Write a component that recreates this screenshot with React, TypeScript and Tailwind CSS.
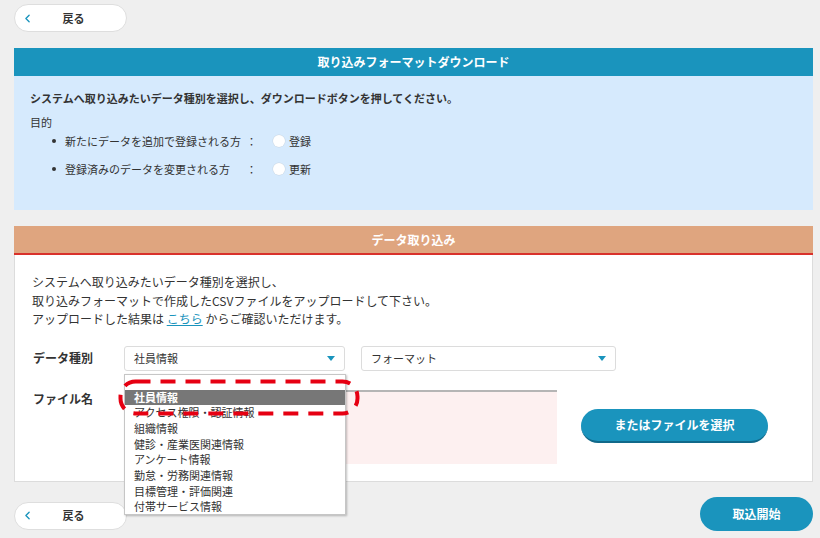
import { ChevronLeft } from "lucide-react";

const FONT = { fontFamily: '"Noto Sans CJK JP", "Noto Sans", sans-serif' };

const DATA_TYPES = [
  "社員情報",
  "アクセス権限・認証情報",
  "組織情報",
  "健診・産業医関連情報",
  "アンケート情報",
  "勤怠・労務関連情報",
  "目標管理・評価関連",
  "付帯サービス情報",
];

function BackButton() {
  return (
    <button className="relative flex h-[28px] w-[113px] items-center justify-center rounded-full border border-[#dedede] bg-white text-[11px] font-bold text-[#333]">
      <ChevronLeft className="absolute left-[6px] h-[13px] w-[13px] text-[#1a94bd]" strokeWidth={2.5} />
      <span className="pl-[6px]">戻る</span>
    </button>
  );
}

function Caret() {
  return (
    <svg width="8" height="5" viewBox="0 0 8 5" className="shrink-0">
      <path d="M0 0h8L4 5z" fill="#1a94bd" />
    </svg>
  );
}

function Radio({ label }: { label: string }) {
  return (
    <div className="ml-[15px] flex items-center gap-[4px]">
      <span className="h-[12px] w-[12px] rounded-full bg-white shadow-[0_0_0_0.5px_#c9d6e3]" />
      <span>{label}</span>
    </div>
  );
}

export default function App() {
  return (
    <div className="h-[538px] w-[820px] overflow-hidden bg-[#efefef] pl-[14px] pr-[7px] pt-[4px] text-[#333]" style={FONT}>
      <BackButton />

      {/* format download */}
      <section className="mt-[16px]">
        <div className="flex h-[28px] items-center justify-center bg-[#1a94bd] text-[12px] font-bold text-white">
          取り込みフォーマットダウンロード
        </div>
        <div className="h-[134px] bg-[#d6eafd] px-[16px] pt-[14px] text-[11px] leading-[16px]">
          <p className="font-bold">システムへ取り込みたいデータ種別を選択し、ダウンロードボタンを押してください。</p>
          <p className="mt-[8px]">目的</p>
          <ul className="mt-[3px] flex flex-col gap-[12px] pl-[22px]">
            <li className="flex items-center">
              <span className="mr-[9px] h-[4px] w-[4px] rounded-full bg-[#333]" />
              <span className="w-[181px]">新たにデータを追加で登録される方</span>
              <span className="w-[12px]">：</span>
              <Radio label="登録" />
            </li>
            <li className="flex items-center">
              <span className="mr-[9px] h-[4px] w-[4px] rounded-full bg-[#333]" />
              <span className="w-[181px]">登録済みのデータを変更される方</span>
              <span className="w-[12px]">：</span>
              <Radio label="更新" />
            </li>
          </ul>
        </div>
      </section>

      {/* data import */}
      <section className="mt-[16px]">
        <div className="flex h-[29px] items-center justify-center border-b-2 border-[#d9312b] bg-[#dfa57f] text-[12px] font-bold text-white">
          データ取り込み
        </div>
        <div className="h-[227px] border-x border-b border-[#dcdcdc] bg-white px-[17px] pt-[18px] text-[11px]">
          <div className="text-[12px] leading-[18.5px]">
            <p>システムへ取り込みたいデータ種別を選択し、</p>
            <p>取り込みフォーマットで作成したCSVファイルをアップロードして下さい。</p>
            <p>
              アップロードした結果は <span className="text-[#1a94bd] underline">こちら</span> からご確認いただけます。
            </p>
          </div>

          <div className="mt-[17px] flex items-center">
            <span className="w-[92px] pl-px text-[12px] font-bold">データ種別</span>
            <div className="relative">
              <div className="flex h-[25px] w-[221px] items-center justify-between rounded-[3px] border border-[#dcdcdc] bg-white pl-[9px] pr-[9px]">
                <span>社員情報</span>
                <Caret />
              </div>
              <ul className="absolute left-0 top-[28px] z-10 h-[141px] w-[222px] border border-[#c6c6c6] bg-white pt-[15px] text-[11px] leading-[15.7px] shadow-[1px_1px_2px_rgba(0,0,0,0.25)]">
                {DATA_TYPES.map((t, i) => (
                  <li key={t} className={i === 0 ? "bg-[#777] pl-[9px] font-bold text-white" : "pl-[9px] text-[#333]"}>
                    {t}
                  </li>
                ))}
              </ul>
              <svg className="pointer-events-none absolute left-[-6px] top-[33px] z-20" width="242" height="37" viewBox="0 0 242 37">
                <rect x="2.5" y="2.5" width="237" height="32" rx="15" fill="none" stroke="#e60012" strokeWidth="4" strokeDasharray="15 10" />
              </svg>
            </div>
            <div className="ml-[16px] flex h-[25px] w-[255px] items-center justify-between rounded-[3px] border border-[#dcdcdc] bg-white pl-[9px] pr-[9px]">
              <span>フォーマット</span>
              <Caret />
            </div>
          </div>

          <div className="mt-[19px] flex items-start">
            <span className="mt-[1px] w-[92px] pl-px text-[12px] font-bold leading-[16px]">ファイル名</span>
            <div className="h-[74px] w-[433px] border-t-2 border-[#b5b5b5] bg-[#fdf0f0]" />
            <button className="ml-[24px] mt-[19px] h-[34px] w-[187px] rounded-full border-b-2 border-[#11698a] bg-[#1a94bd] text-[12px] font-bold text-white">
              またはファイルを選択
            </button>
          </div>
        </div>
      </section>

      <div className="mt-[15px] flex items-center justify-between">
        <div className="pt-[3px]">
          <BackButton />
        </div>
        <button className="h-[34px] w-[113px] rounded-full bg-[#1a94bd] text-[12px] font-bold text-white">取込開始</button>
      </div>
    </div>
  );
}
